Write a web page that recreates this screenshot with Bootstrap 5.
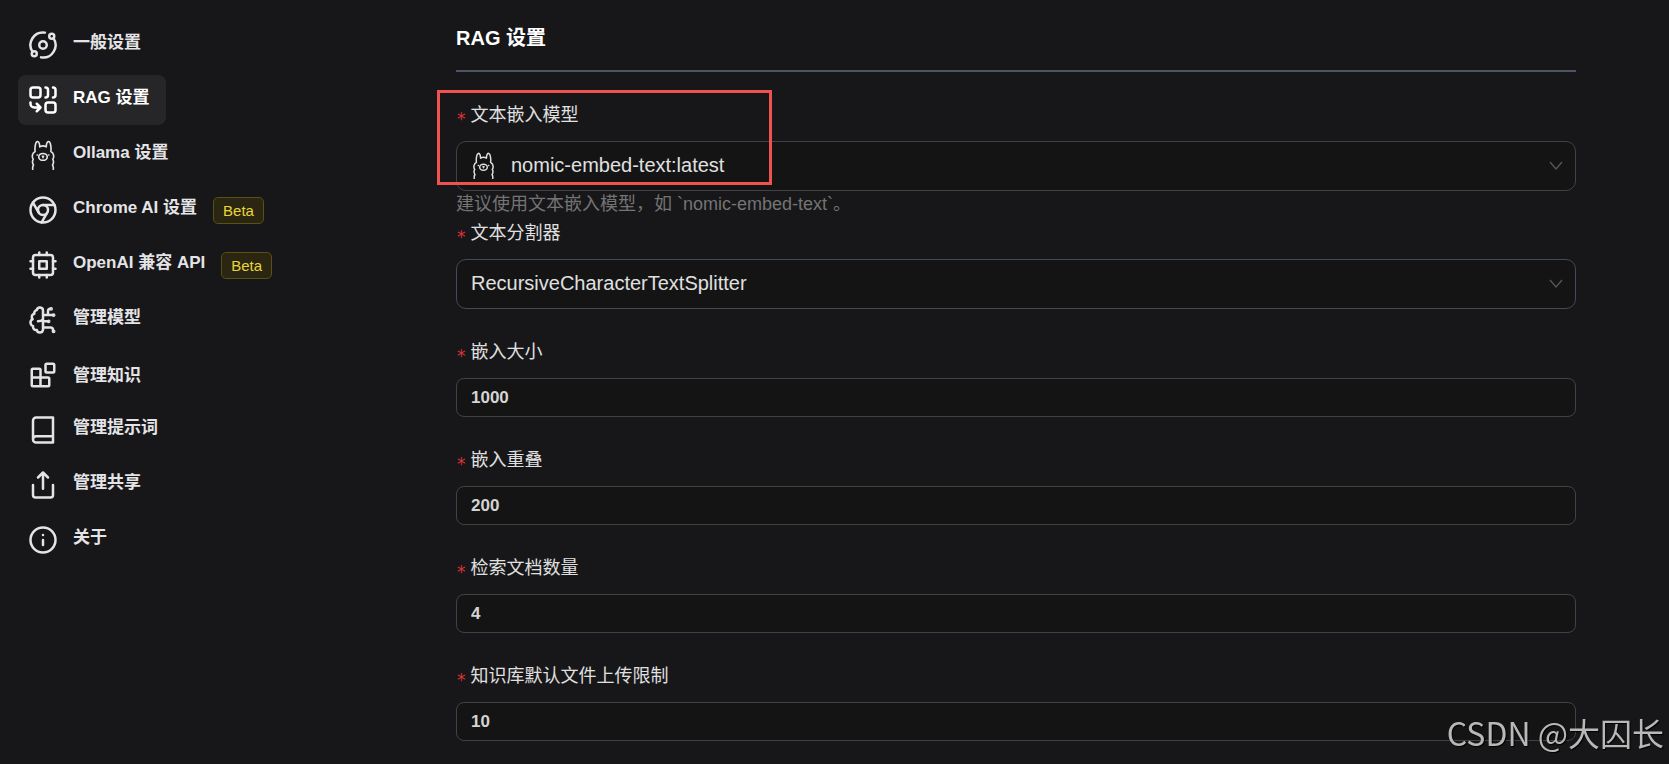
<!DOCTYPE html>
<html lang="zh-CN" data-bs-theme="dark">
<head>
<meta charset="utf-8">
<meta name="viewport" content="width=device-width, initial-scale=1">
<title>RAG 设置</title>
<link href="https://cdn.jsdelivr.net/npm/bootstrap@5.3.0/dist/css/bootstrap.min.css" rel="stylesheet">
<style>
  body { background: #171719; color: #e0e0e0; font-family: "Liberation Sans", "Noto Sans CJK SC", sans-serif; font-size: 18px; line-height: 25px; }
  .side { width: 416px; padding: 20px 18px; }
  .side .nav { gap: 5px; }
  .side .nav-link { display: flex; align-items: flex-start; gap: 15px; padding: 10px 16px 10px 10px; border-radius: 8px; color: #e4e4e7; font-weight: 700; font-size: 17px; }
  .side .nav-link.active { background: #262628; color: #fff; }
  .side .nav-link.centered { align-items: center; }
  .icon { width: 30px; height: 30px; flex: none; fill: none; stroke: currentColor; stroke-width: 2; stroke-linecap: round; stroke-linejoin: round; }
  .llama { stroke-width: 1.3; }
  .beta { height: 27px; padding: 0 9px; border: 1px solid #595014; border-radius: 5px; background: #2b2611; color: #e8d639; font-size: 15px; line-height: 25px; }
  .settings { padding: 25px 93px 20px 40px; min-width: 0; }
  .settings h1 { font-size: 20px; line-height: 26px; font-weight: 700; color: #fff; padding-bottom: 19px; margin: 0 0 28px; border-bottom: 2px solid #4b5563; }
  .field-label { display: flex; align-items: center; gap: 5px; height: 30px; margin-bottom: 11px; }
  .field-label::before { content: "*"; color: #dc3238; font: 17px/22px "DejaVu Sans", sans-serif; padding-top: 8px; height: 30px; padding-left: 1px; }
  .settings .form-control, .settings .form-select { background-color: #141415; border: 1px solid #424242; border-radius: 8px; color: #e0e0e0; padding: 0 14px; }
  .settings .form-control { height: 39px; font-size: 17px; font-weight: 700; color: #d4d4d4; }
  .settings .form-select { height: 50px; font-size: 20px; padding-bottom: 2px; border-radius: 10px; background-image: url("data:image/svg+xml,%3Csvg xmlns='http://www.w3.org/2000/svg' viewBox='0 0 14 10'%3E%3Cpath d='M1 1l6 7 6-7' fill='none' stroke='%23565656' stroke-width='1.4'/%3E%3C/svg%3E"); background-size: 14px 10px; background-position: right 12px center; }
  .settings .with-icon { padding-left: 54px; }
  .settings .slate { border-color: #414b5a; }
  .field { margin-bottom: 28px; }
  .hint { color: #747474; line-height: 27px; }
  .select-icon { left: 14px; top: 11px; width: 27px; height: 27px; }
  .marked { border: 3px solid #ef5350; left: -19px; top: -10px; width: 335px; height: 95px; pointer-events: none; }
  .watermark { right: 5px; bottom: 9px; color: #b8b8b8; font: 400 32px/46px "Noto Sans CJK SC", sans-serif; text-shadow: 1px 1px 1px #000; pointer-events: none; }
</style>
</head>
<body>
<svg class="d-none" xmlns="http://www.w3.org/2000/svg">
  <symbol id="llama" viewBox="0 0 24 24">
    <path d="M3.800 23.500c-.3-1.500 0-2.500.6-3.500-1-1.500-1.100-3-.2-4.500-1.300-2-1-5 1.500-6.300-.3-2-.1-7.500 1.700-8 1.500-.2 2 2.500 2 4.300 1.500-.9 3.700-.9 5.200 0 0-1.800.5-4.500 2-4.300 1.800.5 2 6 1.700 8 2.500 1.300 2.800 4.300 1.500 6.300.9 1.500.8 3-.2 4.500.6 1 .9 2 .6 3.500"/>
    <ellipse cx="12" cy="13.500" rx="3.400" ry="2.700"/><path d="M11.500 13h1M12 13.300v.8M7.300 12h.2M16.500 12h.2"/>
  </symbol>
</svg>
<div class="d-flex min-vh-100">
  <aside class="side flex-shrink-0">
    <nav class="nav flex-column align-items-start">
      <a class="nav-link" href="#"><svg class="icon" viewBox="0 0 24 24"><circle cx="12" cy="12" r="3"/><circle cx="19" cy="5" r="2"/><circle cx="5" cy="19" r="2"/><path d="M10.4 21.900a10 10 0 0 0 9.941-15.416M13.500 2.100a10 10 0 0 0-9.841 15.416"/></svg><span>一般设置</span></a>
      <a class="nav-link active" href="#" aria-current="page"><svg class="icon" viewBox="0 0 24 24"><rect x="2" y="2" width="8" height="8" rx="2"/><rect x="14" y="14" width="8" height="8" rx="2"/><path d="M14 2a2 2 0 0 1 2 2v4a2 2 0 0 1-2 2M20 2a2 2 0 0 1 2 2v4a2 2 0 0 1-2 2M10 18H5a3 3 0 0 1-3-3v-1M7 21l3-3-3-3"/></svg><span>RAG 设置</span></a>
      <a class="nav-link" href="#"><svg class="icon llama"><use href="#llama"/></svg><span>Ollama 设置</span></a>
      <div class="d-flex align-items-center"><a class="nav-link" href="#"><svg class="icon" viewBox="0 0 24 24"><circle cx="12" cy="12" r="10"/><circle cx="12" cy="12" r="4"/><path d="M21.170 8H12M3.950 6.060L8.540 14M10.880 21.940L15.460 14"/></svg><span>Chrome AI 设置</span></a><span class="beta">Beta</span></div>
      <div class="d-flex align-items-center"><a class="nav-link" href="#"><svg class="icon" viewBox="0 0 24 24"><rect x="4" y="4" width="16" height="16" rx="2"/><path d="M9 9h6v6H9zM15 2v2M15 20v2M2 15h2M2 9h2M20 15h2M20 9h2M9 2v2M9 20v2"/></svg><span>OpenAI 兼容 API</span></a><span class="beta">Beta</span></div>
      <a class="nav-link" href="#"><svg class="icon" viewBox="0 0 24 24"><path d="M12 4.500a2.500 2.500 0 0 0-4.960-.46 2.500 2.500 0 0 0-1.980 3 2.500 2.500 0 0 0-1.320 4.240 3 3 0 0 0 .34 5.580 2.500 2.500 0 0 0 2.960 3.080 2.500 2.500 0 0 0 4.910.05L12 20V4.500ZM16 8V5c0-1.100.9-2 2-2M8 13c1.500 0 3-.5 4-1.500M12 13h4M12 18h6a2 2 0 0 1 2 2v1M12 8h8"/><circle cx="20.500" cy="8" r=".5"/><circle cx="16.500" cy="13" r=".5"/><circle cx="20.500" cy="21" r=".5"/><circle cx="18.500" cy="3" r=".5"/></svg><span>管理模型</span></a>
      <a class="nav-link centered" href="#"><svg class="icon" viewBox="0 0 24 24"><rect x="14" y="3" width="7" height="7" rx="1"/><path d="M10 21V8a1 1 0 0 0-1-1H4a1 1 0 0 0-1 1v12a1 1 0 0 0 1 1h12a1 1 0 0 0 1-1v-5a1 1 0 0 0-1-1H3"/></svg><span>管理知识</span></a>
      <a class="nav-link" href="#"><svg class="icon" viewBox="0 0 24 24"><path d="M4 19.500v-15A2.500 2.500 0 0 1 6.500 2H20v20H6.500a2.500 2.500 0 0 1 0-5H20"/></svg><span>管理提示词</span></a>
      <a class="nav-link" href="#"><svg class="icon" viewBox="0 0 24 24"><path d="M4 12v8a2 2 0 0 0 2 2h12a2 2 0 0 0 2-2v-8M16 6l-4-4-4 4M12 2v13"/></svg><span>管理共享</span></a>
      <a class="nav-link" href="#"><svg class="icon" viewBox="0 0 24 24"><circle cx="12" cy="12" r="10"/><path d="M12 16v-4M12 8h.01"/></svg><span>关于</span></a>
    </nav>
  </aside>
  <main class="settings flex-grow-1">
    <h1>RAG 设置</h1>
    <form>
      <div class="position-relative">
        <label class="field-label" for="model">文本嵌入模型</label>
        <div class="position-relative">
          <select class="form-select with-icon" id="model"><option>nomic-embed-text:latest</option></select>
          <svg class="icon llama select-icon position-absolute"><use href="#llama"/></svg>
        </div>
        <div class="hint">建议使用文本嵌入模型，如 `nomic-embed-text`。</div>
        <div class="marked position-absolute"></div>
      </div>
      <div class="field">
        <label class="field-label" for="splitter">文本分割器</label>
        <select class="form-select slate" id="splitter"><option>RecursiveCharacterTextSplitter</option></select>
      </div>
      <div class="field">
        <label class="field-label" for="size">嵌入大小</label>
        <input class="form-control" id="size" type="text" inputmode="numeric" value="1000">
      </div>
      <div class="field">
        <label class="field-label" for="overlap">嵌入重叠</label>
        <input class="form-control" id="overlap" type="text" inputmode="numeric" value="200">
      </div>
      <div class="field">
        <label class="field-label" for="docs">检索文档数量</label>
        <input class="form-control" id="docs" type="text" inputmode="numeric" value="4">
      </div>
      <div>
        <label class="field-label" for="limit">知识库默认文件上传限制</label>
        <input class="form-control" id="limit" type="text" inputmode="numeric" value="10">
      </div>
    </form>
  </main>
</div>
<div class="watermark position-fixed">CSDN @大囚长</div>
<script src="https://cdn.jsdelivr.net/npm/bootstrap@5.3.0/dist/js/bootstrap.bundle.min.js"></script>
</body>
</html>
